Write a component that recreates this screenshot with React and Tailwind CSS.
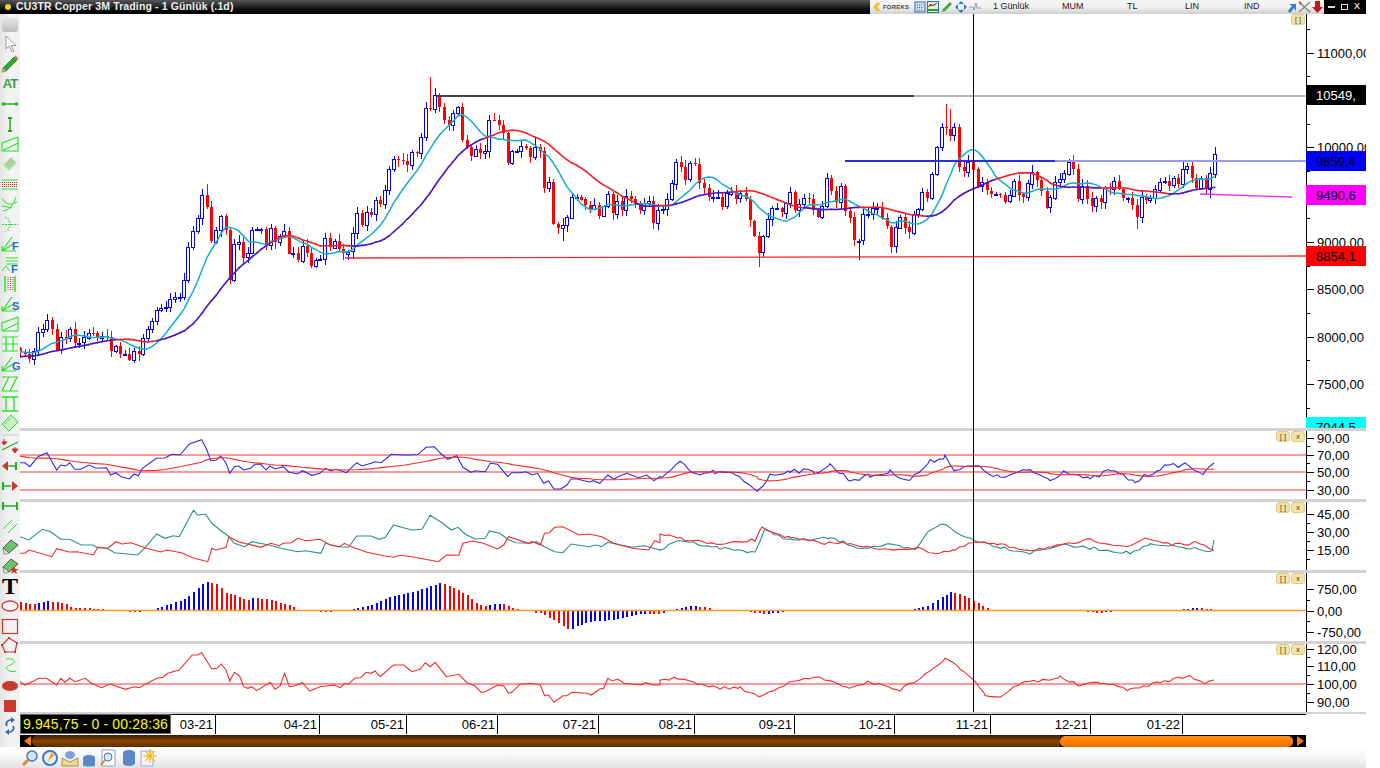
const LEFT = [0,545,14,552,28,567,41,542,55,487,68,478,82,450,95,478,110,540,124,500,137,505,151,477,164,520,178,518,192,502,206,488,218,490,232,505,246,498,260,500,274,542,287,528,301,552,314,552,328,570,342,543,356,552,370,505,383,478,397,453,410,420,424,415,437,412,451,387,465,380,479,380,493,330,505,232,520,183,533,145,547,75,560,112,574,215,589,180,602,138,617,180,629,330,643,222,656,215,670,262,685,250,697,180,711,178,724,178,738,225,752,175,766,217,779,198,793,182,808,250,820,250,835,272,848,228,862,248,874,287,889,270,901,268,916,205,930,232,944,212,958,237,970,250,985,245]
const MID = [8,490,22,430,37,465,50,425,64,433,77,390,91,402,104,360,118,298,131,268,145,270,159,272,172,285,187,247,200,250,214,202,227,115,241,118,254,75,268,110,283,150,296,165,310,130,323,112,337,210,350,230,364,258,378,237,391,248,405,243,418,150,433,151,446,165,460,190,473,280,487,243,501,243,514,228,528,235,541,263,556,232,569,243,583,355,596,337,610,462,625,473,638,465,652,442,665,380,680,380,692,388,706,405,720,416,733,405,748,437,761,408,775,373,788,430,802,392,815,420,829,377,843,387,856,405,870,420,883,398,897,393,910,458,925,420,939,417,952,388,966,340,979,275,994,290,1006,328,1020,280,1034,282,1048,340,1062,355,1076,382,1090,380,1103,380,1117,410,1130,370,1144,365,1157,385,1171,370,1187,388,1199,452,1213,497,1226,547,1240,498,1253,447,1267,415,1281,415,1295,428,1309,398]
const RIGHT = [0,305,15,360,28,342,42,325,56,327,70,360,85,380,97,347,111,263,124,302,139,335,152,287,166,362,179,382,193,452,207,452,220,373,235,372,248,355,262,355,275,385,290,410,304,470,317,412,331,380,344,412,358,428,371,372,385,358,397,307,411,325,427,253,440,172,455,112,467,116,481,137,493,112,508,232,521,245,535,215,550,238,563,290,577,277,590,302,604,312,617,312,631,315,646,335,659,316,673,272,687,313,700,322,713,280,727,245,740,270,754,302,770,353,781,322,796,275,809,267,823,250,836,215,850,236,863,325,877,287,892,325,905,350,919,325,932,338,946,295,959,297,973,272,988,297,1000,325,1015,325,1027,345,1042,380,1055,320,1069,330,1081,325,1096,298,1110,275,1124,272,1138,287,1151,265,1165,282,1178,237,1192,229,1205,265,1219,295,1234,264,1247,297,1261,250,1274,191]

function pairs(a, fx, fy) {
  const out = []
  for (let i = 0; i < a.length; i += 2) out.push([fx(a[i]), fy(a[i + 1])])
  return out
}

const closes = [
  ...pairs(LEFT, v => 20 + v / 3, w => 170 + w / 3),
  ...pairs(MID, v => 350 + v / 3, w => 70 + w / 3),
  ...pairs(RIGHT, v => 790 + v / 3, w => 90 + w / 3),
]

let seed = 7
function rnd() {
  seed = (seed * 16807) % 2147483647
  return seed / 2147483647
}

// wick ends that stick out in the picture
const HIGHS = { 430: 77, 434: 88, 437: 90, 945: 104, 950: 109, 1215: 147, 206: 184, 537: 137, 495: 113 }
const LOWS = { 759: 267, 860: 260, 1138: 229, 562: 241, 891: 253, 1209: 198 }
function nearest(map, x) {
  for (const k of Object.keys(map)) if (Math.abs(k - x) < 2.3) return map[k]
  return null
}

const candles = closes.map(([x, c], i) => {
  const o = i === 0 ? c - 4 : closes[i - 1][1]
  const top = Math.min(o, c)
  const bot = Math.max(o, c)
  return {
    x: Math.round(x),
    up: c <= o,
    top: Math.round(top),
    h: Math.max(Math.round(bot - top), 1),
    hi: nearest(HIGHS, x) ?? Math.round(top - 1 - rnd() * 6),
    lo: nearest(LOWS, x) ?? Math.round(bot + 1 + rnd() * 6),
  }
})

function ema(vals, n, start) {
  let e = start
  const k = 2 / (n + 1)
  return vals.map(v => (e += (v - e) * k))
}
function sma(vals, n, start) {
  return vals.map((_, i) => {
    let sum = 0
    for (let j = i - n + 1; j <= i; j++) sum += j < 0 ? start : vals[j]
    return sum / n
  })
}
const ys = closes.map(c => c[1])
const fast = ema(sma(ys, 9, 352), 2, 352)
const slow = ema(sma(ys, 21, 356), 3, 358)

function line(points) {
  return points.map(p => p[0].toFixed(1) + ',' + p[1].toFixed(1)).join(' ')
}

const zoomPts = (a) => pairs(a, v => 20 + v / 2.45, w => 430 + w / 3)
const rawPts = (a) => pairs(a, v => v, w => w)

// interpolate between hand read points, with a bit of jitter for the sparse stretch
function wiggle(points, amp) {
  const out = []
  for (let i = 0; i < points.length - 1; i++) {
    const [x1, y1] = points[i]
    const [x2, y2] = points[i + 1]
    for (let x = x1; x < x2; x += 4.55) {
      const t = (x - x1) / (x2 - x1)
      out.push([x, y1 + (y2 - y1) * t + (rnd() - 0.5) * amp])
    }
  }
  out.push(points[points.length - 1])
  return out
}

const rsi = [
  ...zoomPts([0,98,12,98,24,110,44,80,66,68,90,120,100,105,112,108,122,98,134,118,148,118,170,105,186,115,212,113,222,135,235,128,248,140,268,147,280,132,290,137,300,115,334,85,355,84,372,73,392,75,415,42,445,29,456,55,468,92,480,91,492,78,505,100,514,130,525,110,536,108,548,120,565,115,575,103,590,103,603,120,612,108,625,117,645,110,658,126,680,132,692,122,715,136,735,130,748,115,760,122,775,118,800,128,825,98,838,108,860,100,870,95,885,98,910,73,940,75,958,75,975,73,995,52,1015,50,1030,70,1048,88,1070,77,1085,112,1105,127,1115,122,1140,125,1152,100,1170,103,1195,140,1205,128,1225,128,1240,125,1255,135,1268,130,1283,160,1295,153,1308,177,1325,177,1340,165,1350,147,1365,147,1395,156,1405,152,1420,160,1440,135,1455,148,1470,137,1487,130,1515,143,1535,135,1553,152,1568,140]),
  ...wiggle(rawPts([662,478,680,463,695,475,715,472,735,475,758,490,770,476,790,470,815,472,830,465,850,480,870,476,890,472,910,480,930,462,945,456,955,470,975,466,1000,478,1030,470,1050,480,1065,470,1090,480,1110,470,1135,482,1160,468,1185,464,1205,474,1214,463]), 5),
]
const rsiAvg = (() => {
  const sm = ema(ema(rsi.map(p => p[1]), 10, 456), 6, 456)
  return rsi.map((p, i) => [p[0], sm[i]])
})()

const dmiTeal = [
  ...zoomPts([0,320,22,330,55,298,75,305,100,328,122,328,150,345,178,345,190,353,213,355,232,368,288,375,305,355,335,312,355,325,375,317,390,320,425,241,435,255,455,253,470,280,490,300,510,318,525,340,550,350,568,335,610,345,640,355,680,365,700,362,737,370,748,340,780,350,805,352,825,318,860,318,880,328,895,322,915,285,935,292,960,300,985,298,1005,256,1030,275,1057,300,1073,292,1090,312,1115,327,1140,325,1150,303,1175,310,1195,328,1215,338,1250,340,1265,335,1285,350,1310,365,1330,368,1350,342,1395,350,1410,345,1425,350,1440,337,1470,345,1500,352,1530,347,1568,360]),
  ...wiggle(rawPts([660,550,680,540,720,548,755,552,765,530,790,540,810,540,830,538,860,548,890,545,915,550,930,530,942,523,960,535,975,540,1000,547,1030,553,1060,545,1090,548,1130,553,1150,545,1190,548,1212,552,1214,540]), 3),
]
const dmiRed = [
  ...zoomPts([0,370,12,370,22,360,78,380,90,356,120,366,140,365,180,375,190,352,215,355,235,335,250,342,272,338,310,355,345,366,360,360,395,368,425,384,460,395,470,355,480,360,505,352,512,320,535,335,590,352,615,340,635,347,645,340,665,338,680,325,700,332,735,328,760,345,782,350,795,340,815,352,850,367,895,378,915,382,930,376,960,380,1025,395,1045,375,1075,376,1085,340,1110,333,1135,340,1170,357,1185,345,1197,320,1245,340,1255,335,1275,345,1285,310,1297,308,1310,292,1330,290,1370,315,1395,312,1425,320,1455,340,1500,355,1540,360,1555,332,1568,338]),
  ...wiggle(rawPts([660,535,680,538,720,545,755,540,762,528,790,538,820,543,850,543,880,550,915,548,935,553,955,550,975,542,1000,545,1030,550,1060,546,1090,540,1130,547,1145,538,1175,545,1195,543,1214,550]), 3),
]
const cci = [
  ...zoomPts([0,755,12,765,35,752,45,745,65,745,90,765,100,745,110,757,122,745,135,755,160,745,175,760,200,773,220,762,258,778,280,770,292,773,335,745,350,742,362,730,390,720,422,675,435,675,445,668,470,717,483,715,493,702,505,720,514,753,525,727,538,738,548,770,558,775,568,770,580,782,613,757,625,778,637,768,648,730,660,770,672,768,692,758,710,783,735,770,770,765,785,773,795,760,805,762,820,745,835,743,848,727,860,730,870,723,882,740,915,705,940,705,960,725,980,718,993,698,1005,710,1017,697,1045,740,1075,733,1095,758,1115,768,1130,787,1140,785,1170,765,1185,768,1197,790,1205,787,1225,763,1250,760,1275,765,1285,797,1295,795,1308,817,1330,797,1340,797,1352,787,1390,790,1400,795,1420,777,1430,775,1440,745,1450,752,1465,748,1480,760,1520,765,1533,758,1550,765,1568,765]),
  ...wiggle(rawPts([660,680,680,678,700,685,720,688,740,688,760,697,780,686,800,680,820,677,845,688,870,682,900,690,925,675,945,659,960,668,975,680,985,695,1000,697,1020,683,1045,680,1060,677,1080,686,1100,682,1130,690,1160,682,1190,676,1205,683,1214,680]), 3),
]

// histogram heights, px above/below the zero line
const macdKeys = [
  ...pairs([0,8,30,6,70,9,110,6,130,2,210,1,235,0,260,-1,290,-1,305,0,330,1,350,4,400,10,420,16,452,28,480,26,505,17,530,14,555,9,570,12,610,11,630,8,660,5,680,1,700,0,730,-1,760,-1,790,0,845,3,880,8,910,14,945,17,965,18,1000,23,1030,27,1050,24,1090,16,1120,6,1140,4,1180,7,1205,2,1230,0,1255,-1,1280,-3,1310,-10,1345,-19,1360,-16,1390,-11,1420,-10,1450,-9,1500,-5,1520,-3,1568,-3], v => 20 + v / 2.45, h => h),
  ...rawPts([662,-2,680,2,692,4,705,3,715,0,750,-1,765,-3,775,-2,790,0,835,1,860,-1,880,0,900,-1,925,3,950,18,965,14,985,3,990,0,1090,-1,1100,-2,1110,-1,1130,0,1140,-1,1155,0,1180,1,1195,2,1214,1]),
]
function macdAt(x) {
  for (let i = 0; i < macdKeys.length - 1; i++) {
    const [a, ha] = macdKeys[i]
    const [b, hb] = macdKeys[i + 1]
    if (x >= a && x <= b) return ha + (hb - ha) * ((x - a) / (b - a))
  }
  return 0
}
const macd = closes.map(([x]) => ({ x: Math.round(x), v: macdAt(x) }))

function Candles() {
  return (
    <g shapeRendering="crispEdges">
      {candles.map((c, i) => {
        const col = c.up ? '#0000ff' : '#ff0000'
        return (
          <g key={i}>
            <rect x={c.x} y={c.hi} width="1" height={Math.max(c.lo - c.hi, 1)} fill={col} />
            {c.up
              ? <rect x={c.x - 1.5} y={c.top + 0.5} width="3" height={c.h} fill="#fff" stroke={col} />
              : <rect x={c.x - 1} y={c.top} width="3" height={c.h} fill={col} />}
          </g>
        )
      })}
    </g>
  )
}

function SlowLine() {
  const segs = []
  for (let i = 1; i < closes.length; i++) {
    const col = fast[i] <= slow[i] ? '#4c14c4' : '#f4202a'
    segs.push(
      <line key={i} x1={closes[i - 1][0]} y1={slow[i - 1]} x2={closes[i][0]} y2={slow[i]} stroke={col} strokeWidth="1.6" strokeLinecap="round" />
    )
  }
  return <g>{segs}</g>
}

function Axis({ y, h, labels, ticks = [], minor = [] }) {
  return (
    <g>
      <rect x="1306" y={y} width="1" height={h} fill="#000" />
      {ticks.map(t => <rect key={t} x="1306" y={t} width="8" height="1" fill="#000" />)}
      {minor.map(t => <rect key={t} x="1306" y={t} width="4" height="1" fill="#000" />)}
      {labels.map(([t, txt]) => (
        <text key={txt} x="1317" y={t + 5} className="fill-black font-['Liberation_Sans',sans-serif] text-[13px]">{txt}</text>
      ))}
    </g>
  )
}

function PriceBox({ y, h = 20, bg, fg = '#000', txt }) {
  return (
    <g>
      <rect x="1306" y={y} width="60" height={h} fill={bg} />
      <text x="1316" y={y + 15} fill={fg} className="font-['Liberation_Sans',sans-serif] text-[13px]">{txt}</text>
    </g>
  )
}

function TinyBtn({ children }) {
  return (
    <span className="flex h-[11px] w-[14px] items-center justify-center rounded-[3px] border border-[#e0cc80] bg-[#f3e3a4] font-['Liberation_Sans',sans-serif] text-[7px] leading-none text-[#333]">
      {children}
    </span>
  )
}

function Panel({ y, h, btns = 2, children }) {
  return (
    <div className="relative" style={{ height: h }}>
      <svg className="block h-full w-[1346px]" viewBox={`20 ${y} 1346 ${h}`}>
        {children}
      </svg>
      <div className="absolute right-[61px] top-0 flex gap-px">
        {btns === 2 && <TinyBtn>[ ]</TinyBtn>}
        {btns === 2 ? <TinyBtn>x</TinyBtn> : <TinyBtn>[ ]</TinyBtn>}
      </div>
    </div>
  )
}

function Sep() {
  return <div className="h-[3px] bg-[#d2d2d2]" />
}

const lime = '#22e622'
const grn = '#1cb024'
const maroon = '#c8392e'

function Ico({ children }) {
  return <svg className="block h-5 w-5" viewBox="0 0 20 20" fill="none">{children}</svg>
}

function Fan({ letter }) {
  return (
    <Ico>
      <path d="M2 17L12 3M2 17L15 9M2 17H16M2 17V12" stroke={lime} strokeWidth="1.2" />
      {letter && <text x="12" y="16" fill="#2f62d8" className="font-['Liberation_Sans',sans-serif] text-[11px] font-bold">{letter}</text>}
    </Ico>
  )
}

const TOOLS = [
  <Ico><path d="M6 2V15L9 12L12 18L14 17L11 11.500L16 11.500Z" fill="#fff" stroke="#9a9a9a" /></Ico>,
  <Ico><path d="M3 14L14 3L17 6L6 17L2 18Z" fill="#2fa83a" stroke="#186a20" strokeWidth=".7" /><path d="M14 3L15.500 1.500L18.500 4.500L17 6Z" fill="#e86a6a" /><path d="M3 14L6 17L2 18Z" fill="#f0a070" /></Ico>,
  <div className="flex h-5 w-5 items-center justify-center font-['Liberation_Sans',sans-serif] text-[13px] font-bold tracking-[-1px] text-[#3f9e4e]">AT</div>,
  <Ico><path d="M3 10H17" stroke={grn} strokeWidth="1.500" /><path d="M2 8.500H5V11.500H2ZM15 8.500H18V11.500H15Z" fill={grn} /></Ico>,
  <Ico><path d="M10 4V17" stroke={grn} strokeWidth="1.500" /><path d="M8 3H12V5H8ZM8 16H12V18H8Z" fill={grn} /></Ico>,
  <Ico><path d="M2 17H18V3M2 17V9L18 3M2 17L18 9" stroke={lime} strokeWidth="1.100" /></Ico>,
  <Ico><path d="M3 11L11 3L17 9L9 17Z" fill="#a8e6a8" /><path d="M6 9L10 13M8 7L12 11M10 5L14 9" stroke="#f08080" strokeWidth="1.500" strokeDasharray="1 1" /></Ico>,
  <Ico><path d="M2 6H18M2 15H18" stroke={lime} /><path d="M2 8.500H18M2 10.500H18M2 12.500H18" stroke="#b03030" strokeDasharray="1 1" /></Ico>,
  <Ico><path d="M2 4Q7 14 17 8M3 17Q12 16 16 3M2 12L12 14" stroke={lime} strokeWidth="1" /></Ico>,
  <Ico><path d="M5 3Q16 10 5 18M2 10.500H18" stroke={lime} strokeWidth="1" strokeDasharray="2 1" /><path d="M9 4V17" stroke={lime} strokeDasharray="1 2" /></Ico>,
  <Fan letter="F" />,
  <Ico><path d="M6 4H18M6 7H18M6 10H18" stroke={lime} /><path d="M2 17L6 12L10 17" stroke={lime} /><text x="11" y="19" fill="#2f62d8" className="font-['Liberation_Sans',sans-serif] text-[11px] font-bold">F</text></Ico>,
  <Ico><path d="M5 2V18M15 2V18" stroke={lime} strokeWidth="1.500" /><path d="M8 3V17M10.500 3V17M13 3V17" stroke="#c03030" strokeDasharray="1 1" /></Ico>,
  <Fan letter="S" />,
  <Ico><path d="M2 17H18V3M2 17V9L18 3M2 17L18 9" stroke={lime} strokeWidth="1.100" /></Ico>,
  <Ico><path d="M2 3H18M2 10H18M2 17H18M6 3V17M13 3V17" stroke={lime} strokeWidth="1.200" /></Ico>,
  <Fan letter="G" />,
  <Ico><path d="M2 3H18M2 17H18M2 17L9 3M10 17L17 3" stroke={lime} strokeWidth="1.200" /></Ico>,
  <Ico><path d="M2 3H18M2 17H18M6 3V17M14 3V17" stroke={lime} strokeWidth="1.300" /></Ico>,
  <Ico><path d="M2 10L11 1L18 8L9 17Z" fill="#c8f0c8" stroke={lime} /><path d="M5 10L11 4" stroke={grn} strokeDasharray="1 1" /></Ico>,
  <div className="mx-[2px] h-[2px] bg-[#dcdcdc]" />,
  <Ico><path d="M2 14L18 6" stroke={grn} strokeWidth="1.200" /><path d="M4 3V6M2 6L4 9L7 6ZM15 11V14M12 13H18L15 17Z" fill="#c8302c" stroke="#c8302c" /></Ico>,
  <Ico><path d="M8 10H16" stroke={grn} strokeWidth="1.500" /><path d="M16 6V14" stroke={grn} strokeWidth="2" /><path d="M2 10L8 5V15Z" fill="#c8392e" /></Ico>,
  <Ico><path d="M3 10H11" stroke={grn} strokeWidth="1.500" /><path d="M3 6V14" stroke={grn} strokeWidth="2" /><path d="M18 10L12 5V15Z" fill="#c8392e" /></Ico>,
  <Ico><path d="M3 10H17" stroke={grn} strokeWidth="1.500" /><path d="M3 6V14M17 6V14" stroke={grn} strokeWidth="2" /></Ico>,
  <Ico><path d="M3 13L12 4M8 17L17 8" stroke={lime} strokeWidth="1" /></Ico>,
  <Ico><path d="M3 12L11 4L18 9L9 17Z" fill="#6fc36f" stroke="#3a3a3a" strokeWidth=".8" /><path d="M3 12L9 17L7 18H4Z" fill="#e6e6e6" stroke="#555" strokeWidth=".6" /></Ico>,
  <Ico><path d="M3 11L11 3L18 8L9 16Z" fill="#6fc36f" stroke="#3a3a3a" strokeWidth=".8" /><path d="M3 11L9 16L7 17H4Z" fill="#e6e6e6" stroke="#555" strokeWidth=".6" /><path d="M14 10L15.500 13H18.500L16 15L17 18L14 16L11 18L12 15L10 13H12.500Z" fill="#d8342c" /></Ico>,
  <div className="flex h-5 w-5 items-center justify-center font-['Liberation_Serif',serif] text-[24px] font-bold leading-none text-black">T</div>,
  <Ico><ellipse cx="10" cy="10" rx="8" ry="5" stroke={maroon} strokeWidth="1.300" fill="#f4f4f4" /></Ico>,
  <Ico><rect x="2.500" y="3.500" width="15" height="14" stroke={maroon} strokeWidth="1.200" /></Ico>,
  <Ico><path d="M9 2L17 7L15 16H5L2 9Z" stroke={maroon} strokeWidth="1.200" /><path d="M8 1H10V3H8ZM16 6H18V8H16ZM14 15H16V17H14ZM4 15H6V17H4ZM1 8H3V10H1Z" fill={maroon} /></Ico>,
  <Ico><path d="M6 3C14 2 17 5 12 8C7 11 4 11 8 14C10 16 14 16 16 15" stroke={lime} strokeWidth="1" /></Ico>,
  <Ico><ellipse cx="10" cy="10" rx="8" ry="5" fill={maroon} /></Ico>,
  <Ico><rect x="4" y="4" width="12" height="12" fill={maroon} /></Ico>,
  <Ico><path d="M13 4C8 3 5 7 7 10M7 16C12 17 15 13 13 10" stroke="#3a6aa8" strokeWidth="1.800" /><path d="M11 1L15 4L11 7ZM9 13L5 16L9 19Z" fill="#3a6aa8" /></Ico>,
]

function LeftBar() {
  return (
    <div className="w-5 shrink-0 bg-linear-to-r from-[#e4e4e4] via-[#f4f4f4] to-[#f0f0f0]">
      <div className="flex h-5 items-center justify-center">
        <div className="h-[15px] w-4 rounded-[3px] bg-linear-to-b from-[#e8e8e8] to-[#bdbdbd]" />
      </div>
      {TOOLS.map((t, i) => <div key={i}>{t}</div>)}
    </div>
  )
}

function TopBar() {
  return (
    <div className="flex h-[14px] items-stretch bg-linear-to-b from-[#565656] via-[#222] to-black">
      <div className="flex w-[870px] items-center">
        <span className="ml-[5px] mr-[5px] h-[6px] w-[6px] rounded-full bg-[#ffd21a]" />
        <span className="font-['Liberation_Sans',sans-serif] text-[10.5px] font-bold tracking-[0.13px] whitespace-nowrap text-[#eee]">CU3TR Copper 3M Trading - 1 Günlük (.1d)</span>
      </div>
      <div className="relative flex w-[454px] items-center bg-linear-to-b from-[#f6f6f6] via-[#f0f0f0] to-[#cfcfcf] font-['Liberation_Sans',sans-serif] text-[9px] text-[#222]">
        <svg className="ml-[2px] h-[12px] w-[10px]" viewBox="0 0 10 12"><path d="M6 1L1 6L6 11L8 9L5 6L8 3Z" fill="#f0c020" /></svg>
        <span className="ml-px w-[29px] text-[6px] font-bold tracking-[0.2px] text-[#444]">FOREKS</span>
        <svg className="ml-[2px] h-[12px] w-[12px]" viewBox="0 0 12 12"><rect x="1" y="1" width="10" height="10" fill="#cfe0f4" stroke="#3a6ab0" /><path d="M3 4H9M3 6.500H9M3 9H9" stroke="#3a6ab0" strokeDasharray="1 1" /></svg>
        <svg className="ml-px h-[12px] w-[12px]" viewBox="0 0 12 12"><rect x="0.500" y="0.500" width="11" height="11" fill="#dff0d8" stroke="#3a6ab0" /><path d="M1 6L4 3L6 5L10 2" stroke="#d03030" /><path d="M1 9H11" stroke="#2aa02a" strokeWidth="2" /></svg>
        <svg className="ml-[2px] h-[12px] w-[12px]" viewBox="0 0 12 12"><path d="M2 8L9 1L11 3L4 10L1 11Z" fill="#3aa83a" /></svg>
        <svg className="ml-[2px] h-[12px] w-[12px]" viewBox="0 0 12 12"><path d="M6 0L9 3H3ZM6 12L3 9H9ZM0 6L3 3V9ZM12 6L9 9V3Z" fill="#3a78d0" /></svg>
        <svg className="ml-[2px] h-[12px] w-[12px]" viewBox="0 0 12 12"><path d="M0 6H4L5 9L7 2L8 7H12" stroke="#8aa0b8" fill="none" /></svg>
        <span className="absolute left-[123px]">1 Günlük</span>
        <span className="absolute left-[192px]">MUM</span>
        <span className="absolute left-[257px]">TL</span>
        <span className="absolute left-[315px]">LIN</span>
        <span className="absolute left-[374px]">IND</span>
        <svg className="absolute left-[415px] h-[12px] w-[12px]" viewBox="0 0 12 12"><path d="M3 10L7 5L4 3H11V10L9 7L5 12Z" fill="#3a78d0" /></svg>
        <svg className="absolute left-[428px] h-[12px] w-[13px]" viewBox="0 0 13 12"><path d="M1 1L12 11M12 1L1 11" stroke="#888" strokeWidth="1.500" /><path d="M1 0L4 2L2 4Z" fill="#d04030" /></svg>
        <svg className="absolute left-[442px] h-[12px] w-[11px]" viewBox="0 0 11 12"><path d="M3 0H8V6H11L5.500 12L0 6H3Z" fill="#c01818" /></svg>
      </div>
      <div className="flex flex-1 items-center justify-end gap-[6px] bg-black pr-[6px] font-['Liberation_Sans',sans-serif] text-[9px] font-bold text-[#ddd]">
        <span className="h-[1.500px] w-[7px] bg-[#ddd]" />
        <span className="h-[6px] w-[7px] border border-[#ddd]" />
        <span>X</span>
      </div>
    </div>
  )
}

const MONTHS = [['03-21', 45], ['04-21', 104], ['05-21', 87], ['06-21', 91], ['07-21', 101], ['08-21', 96], ['09-21', 100], ['10-21', 100], ['11-21', 96], ['12-21', 100], ['01-22', 92]]

function TimeAxis() {
  return (
    <div className="flex h-[21px] w-[1286px] font-['Liberation_Sans',sans-serif] text-[13px] text-black">
      <div className="flex h-[20px] w-[151px] shrink-0 items-center justify-center border border-[#666] bg-black text-[14px] tracking-[0.15px] whitespace-nowrap text-[#ffff00]">9.945,75 - 0 - 00:28:36</div>
      <div className="flex flex-1 border-t border-black">
        {MONTHS.map(([m, w]) => (
          <div key={m} className="flex h-[19px] shrink-0 items-center justify-end border-r border-black pr-[2px]" style={{ width: w }}>{m}</div>
        ))}
      </div>
    </div>
  )
}

function ScrollBar() {
  return (
    <div className="flex h-3 w-[1286px] items-center bg-black">
      <svg className="ml-[4px] h-[10px] w-[8px] shrink-0" viewBox="0 0 8 10"><path d="M7 0V10L0 5Z" fill="#ff8000" /></svg>
      <div className="h-full w-[1028px] rounded-l-[6px] bg-linear-to-b from-[#3a1c00] via-[#8a4800] to-[#5a2e00]" />
      <div className="h-[11px] w-[233px] rounded-[5px] bg-linear-to-b from-[#ff8c10] via-[#ff8000] to-[#e87000]" />
      <svg className="ml-[3px] h-[10px] w-[8px] shrink-0" viewBox="0 0 8 10"><path d="M1 0V10L8 5Z" fill="#ff8000" /></svg>
    </div>
  )
}

function BottomBar() {
  return (
    <div className="flex h-[21px] items-center bg-linear-to-b from-white via-[#f4f4f4] to-[#e2e2e2] pl-[21px]">
      <svg className="h-[18px] w-[18px]" viewBox="0 0 18 18"><circle cx="11" cy="7" r="5" fill="#cfe4fa" stroke="#4a78b0" strokeWidth="1.500" /><path d="M7 11L2 16" stroke="#d88a30" strokeWidth="3" /></svg>
      <svg className="ml-[2px] h-[18px] w-[18px]" viewBox="0 0 18 18"><circle cx="9" cy="9" r="7" fill="#e8f0fa" stroke="#3a78c8" strokeWidth="2" /><path d="M6 14L10 4L14 6L9 10Z" fill="#f0a030" /></svg>
      <svg className="ml-[2px] h-[18px] w-[18px]" viewBox="0 0 18 18"><path d="M1 9L9 13L17 9V17H1Z" fill="#f0d898" stroke="#b09040" /><ellipse cx="9" cy="6" rx="5" ry="4" fill="#7aa4d8" /></svg>
      <svg className="ml-[2px] h-[18px] w-[16px]" viewBox="0 0 16 18"><path d="M2 9C2 5 14 5 14 9V16C14 18 2 18 2 16Z" fill="#5a88c8" /></svg>
      <svg className="ml-[2px] h-[18px] w-[18px]" viewBox="0 0 18 18"><path d="M3 1H16V17H3Z" fill="#fff" stroke="#8aa0c0" /><circle cx="9" cy="8" r="4" fill="#d8e8f8" stroke="#4a78b0" /><path d="M6 11L2 16" stroke="#d88a30" strokeWidth="2" /></svg>
      <svg className="ml-[5px] h-[18px] w-[14px]" viewBox="0 0 14 18"><path d="M1 4C1 0 13 0 13 4V14C13 18 1 18 1 14Z" fill="#5a88c8" /></svg>
      <svg className="ml-[4px] h-[18px] w-[18px]" viewBox="0 0 18 18"><path d="M1 2H13V17H1Z" fill="#f4f4fa" stroke="#a0a8c8" /><circle cx="10" cy="7" r="4" fill="#ffe060" /><path d="M10 0V14M3 7H17M5 2L15 12M15 2L5 12" stroke="#f0b030" /></svg>
    </div>
  )
}

export default function App() {
  return (
    <div className="h-[768px] w-[1380px] overflow-hidden bg-white">
      <div className="flex h-full w-[1366px] flex-col">
        <TopBar />
        <div className="flex min-h-0 flex-1">
          <LeftBar />
          <div className="w-[1346px]">
            <div className="relative">
              <Panel y={14} h={414} btns={1}>
                <Candles />
                <polyline points={line(closes.map((c, i) => [c[0], fast[i]]))} fill="none" stroke="#14aec8" strokeWidth="1.500" />
                <SlowLine />
                <path d="M437 96H914" stroke="#444" strokeWidth="2" />
                <path d="M914 96H1306" stroke="#999" strokeWidth="1.500" />
                <path d="M845 161H1055" stroke="#2c2ce0" strokeWidth="1.800" />
                <path d="M1055 161H1306" stroke="#9a9af4" strokeWidth="1.800" />
                <path d="M345 258L1306 256" stroke="#f52a2a" strokeWidth="1.300" />
                <path d="M1200 194L1292 197" stroke="#f22af2" strokeWidth="1.300" />
                <Axis
                  y={14}
                  h={414}
                  ticks={[53, 100, 147, 195, 242, 289, 337, 384]}
                  minor={[29, 76, 124, 171, 218, 266, 313, 360, 408]}
                  labels={[[53, '11000,00'], [147, '10000,00'], [242, '9000,00'], [289, '8500,00'], [337, '8000,00'], [384, '7500,00']]}
                />
                <PriceBox y={85} bg="#000" fg="#fff" txt="10549," />
                <PriceBox y={151} bg="#0000ff" txt="9859,4" />
                <PriceBox y={185} bg="#ff00ff" txt="9490,6" />
                <PriceBox y={246} bg="#ff0000" txt="8854,1" />
                <PriceBox y={417} h={20} bg="#00ffff" txt="7044,5" />
              </Panel>
              <Sep />
              <Panel y={431} h={68}>
                <path d="M20 455H1306M20 472H1306" stroke="#f53838" strokeWidth="1.200" />
                <path d="M20 490H1306" stroke="#f87a7a" strokeWidth="1.600" />
                <polyline points={line(rsi)} fill="none" stroke="#2a2af0" strokeWidth="1.100" />
                <polyline points={line(rsiAvg)} fill="none" stroke="#f52a2a" strokeWidth="1.100" />
                <Axis y={431} h={68} ticks={[438, 455, 472, 490]} minor={[446, 463, 481]} labels={[[438, '90,00'], [455, '70,00'], [472, '50,00'], [490, '30,00']]} />
              </Panel>
              <Sep />
              <Panel y={502} h={68}>
                <polyline points={line(dmiTeal)} fill="none" stroke="#258f8c" strokeWidth="1.100" />
                <polyline points={line(dmiRed)} fill="none" stroke="#f52a2a" strokeWidth="1.100" />
                <Axis y={502} h={68} ticks={[514, 532, 550]} minor={[523, 541, 559]} labels={[[514, '45,00'], [532, '30,00'], [550, '15,00']]} />
              </Panel>
              <Sep />
              <Panel y={573} h={68}>
                <g shapeRendering="crispEdges">
                  {macd.map((b, i) => {
                    if (Math.abs(b.v) < 0.95) return null
                    const h = Math.round(Math.abs(b.v))
                    const rising = i > 0 && b.v > macd[i - 1].v
                    return <rect key={i} x={b.x} y={b.v > 0 ? 610 - h : 611} width="2" height={h} fill={rising ? '#0000ff' : '#ff0000'} />
                  })}
                </g>
                <path d="M20 610.500H1306" stroke="#ff9a2a" strokeWidth="1.500" />
                <Axis y={573} h={68} ticks={[589, 611, 632]} minor={[600, 621]} labels={[[589, '750,00'], [611, '0,00'], [632, '-750,00']]} />
              </Panel>
              <Sep />
              <Panel y={644} h={68}>
                <path d="M20 684H1306" stroke="#f87a7a" strokeWidth="1.600" />
                <polyline points={line(cci)} fill="none" stroke="#f52a2a" strokeWidth="1.100" />
                <Axis y={644} h={68} ticks={[649, 666, 684, 702]} minor={[657, 675, 693]} labels={[[649, '120,00'], [666, '110,00'], [684, '100,00'], [702, '90,00']]} />
              </Panel>
              <div className="h-[2px] bg-[#d2d2d2]" />
              <div className="absolute bottom-[2px] left-[953px] top-0 w-px bg-black" />
            </div>
            <TimeAxis />
            <ScrollBar />
          </div>
        </div>
        <BottomBar />
      </div>
    </div>
  )
}
